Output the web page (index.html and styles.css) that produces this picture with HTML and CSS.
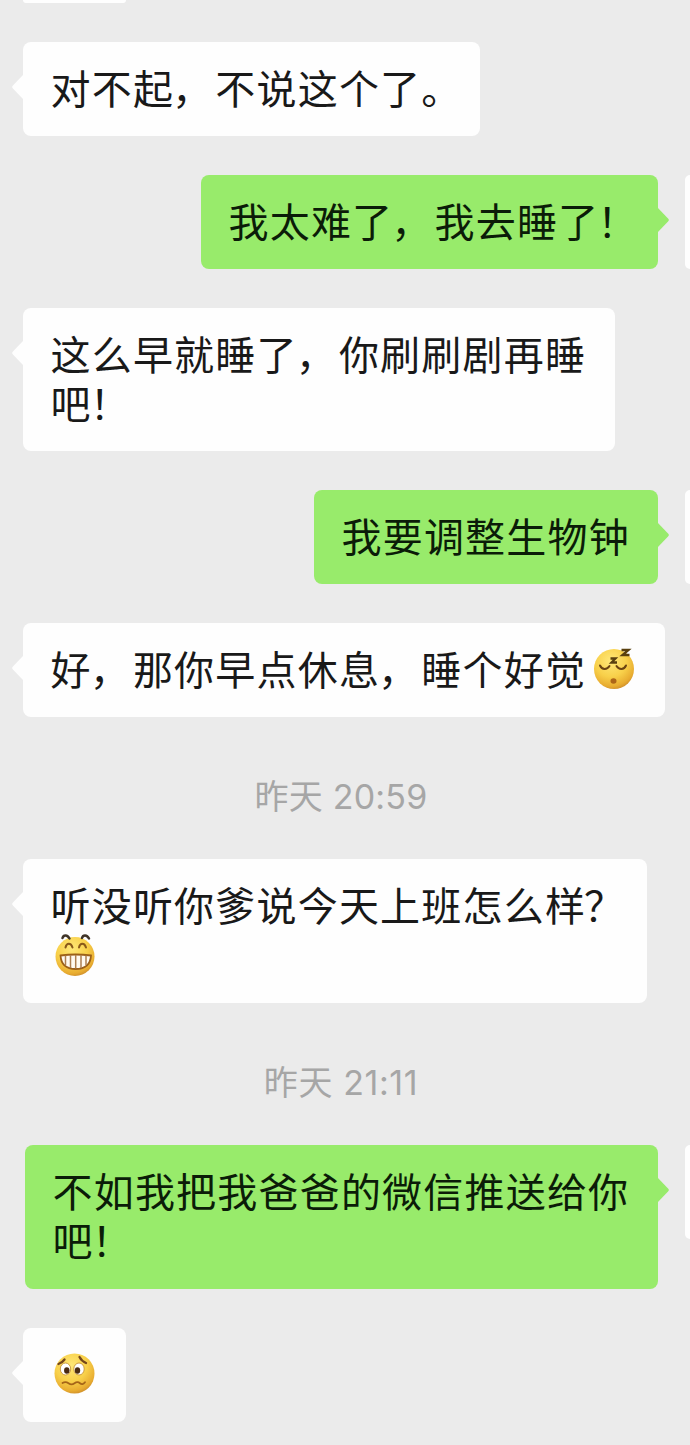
FILE: index.html
```
<!DOCTYPE html>
<html lang="zh-CN">
<head>
<meta charset="utf-8">
<title>聊天</title>
<link rel="stylesheet" href="styles.css">
</head>
<body>
<svg class="defs" width="0" height="0" aria-hidden="true">
  <defs>
    <radialGradient id="face" cx="0.42" cy="0.3" r="0.72">
      <stop offset="0" stop-color="#ffe878"/>
      <stop offset="0.55" stop-color="#f8d04a"/>
      <stop offset="0.88" stop-color="#e8ac30"/>
      <stop offset="1" stop-color="#d0902c"/>
    </radialGradient>
  </defs>
</svg>
<main class="chat">
  <div class="row"><div class="bubble stub"></div></div>
  <div class="row"><div class="bubble in w-457">对不起<span class="punct">，</span>不说这个了。</div></div>
  <div class="row mine"><div class="bubble out w-457">我太难了<span class="punct">，</span>我去睡了<span class="punct">！</span></div><div class="avatar"></div></div>
  <div class="row"><div class="bubble in w-592">这么早就睡了<span class="punct">，</span>你刷刷剧再睡<br>吧<span class="punct">！</span></div></div>
  <div class="row mine"><div class="bubble out w-344">我要调整生物钟</div><div class="avatar"></div></div>
  <div class="row"><div class="bubble in w-642">好<span class="punct">，</span>那你早点休息<span class="punct">，</span>睡个好觉<svg class="emoji sleepy" viewBox="0 0 42 42">
    <circle cx="21" cy="22" r="20" fill="url(#face)"/>
    <g fill="none" stroke="#6b4412" stroke-width="2" stroke-linecap="round">
      <path d="M7 18.500c2 4.500 7 4.500 9.500 .5M23.500 19c2.500 4 7.500 4 9.500-.5"/>
      <path d="M17.500 11.500h5l-4 4h5.500" stroke="#59400f" stroke-width="2.300" stroke-linecap="butt"/>
      <path d="M28.500 3h7l-6 5h7" stroke="#59400f" stroke-width="2.300" stroke-linecap="butt"/>
    </g>
    <ellipse cx="20.500" cy="34" rx="3" ry="2.800" fill="#ad6518"/>
  </svg></div></div>
  <div class="time">昨天 20:59</div>
  <div class="row"><div class="bubble tall in w-624">听没听你爹说今天上班怎么样<span class="punct">？</span><br><svg class="emoji" viewBox="0 0 42 42">
    <circle cx="21" cy="22.500" r="19.500" fill="url(#face)"/>
    <g fill="none" stroke="#3f3428" stroke-width="2.500" stroke-linecap="round">
      <path d="M8.500 4c1-3.500 5-3.500 7 .5M28 4c1-3.500 5-3.500 7 .5"/>
      <path d="M11.500 13.500c1-5 5.500-5 7 0M25 13.500c1-5 5.500-5 7 0" stroke="#8a5919" stroke-width="2"/>
    </g>
    <path d="M6.500 21.500q15-2 30.500 0c-.5 9-6 13.500-15.300 13.500S7 30.500 6.500 21.500z" fill="#fffaf0" stroke="#9c6018" stroke-width="1.800"/>
    <path d="M11.500 21.500v9.500M16.500 21v13M21.700 21v13.500M27 21v13M32 21.500v9.500" stroke="#ad7f50" stroke-width="1.500"/>
  </svg></div></div>
  <div class="time late">昨天 21:11</div>
  <div class="row mine"><div class="bubble tall out w-633">不如我把我爸爸的微信推送给你<br>吧<span class="punct">！</span></div><div class="avatar"></div></div>
  <div class="row"><div class="bubble in w-103"><svg class="emoji worried" viewBox="0 0 42 42">
    <circle cx="21.500" cy="21.500" r="20" fill="url(#face)"/>
    <ellipse cx="12.500" cy="17" rx="5.200" ry="6" fill="#fff" stroke="#c08a2d" stroke-width=".8"/>
    <ellipse cx="26" cy="17" rx="5.200" ry="6" fill="#fff" stroke="#c08a2d" stroke-width=".8"/>
    <ellipse cx="13.800" cy="18.500" rx="2.700" ry="3.300" fill="#4a2b12"/>
    <ellipse cx="24.500" cy="18.500" rx="2.700" ry="3.300" fill="#4a2b12"/>
    <g fill="none" stroke="#74461b" stroke-linecap="round">
      <path d="M5.500 12q3.500-1 6-4.500M26.500 5q2 4 6.500 6" stroke-width="2.300"/>
      <path d="M9.500 31q3-2 6 .2t6 0t5.500 0t5-1" stroke="#a56518" stroke-width="1.800"/>
    </g>
  </svg></div></div>
</main>
</body>
</html>
```
FILE: styles.css
```
* { box-sizing: border-box; }
body {
  margin: 0;
  background: #ebebeb;
  font-family: "Noto Sans CJK SC", sans-serif;
  color: #191919;
}
.defs { position: absolute; }
.chat {
  display: flex;
  flex-direction: column;
  gap: 39px;
  width: 690px;
  height: 1445px;
  overflow: hidden;
}
.row { display: flex; padding-left: 23px; }
.mine { justify-content: flex-end; padding-left: 0; }
.bubble {
  position: relative;
  flex: none;
  min-height: 94px;
  padding: 21px 0 24px 27.500px;
  border-radius: 8px;
  font-size: 40px;
  letter-spacing: 1.200px;
  line-height: 49px;
  white-space: nowrap;
}
.bubble.stub { width: 103px; min-height: 0; height: 3px; padding: 0; border-radius: 0 0 8px 8px; background: #fefefe; }
.bubble.tall { height: 144px; }
.in { background: #fefefe; }
.out { background: #98eb6b; color: #0b1c08; }
.in::before, .out::after {
  content: "";
  position: absolute;
  top: 32px;
  width: 12px;
  height: 26px;
  background: inherit;
}
.in::before { left: -11px; clip-path: polygon(100% 0, 8% 44%, 0 50%, 8% 56%, 100% 100%); }
.out::after { right: -11px; clip-path: polygon(0 0, 92% 44%, 100% 50%, 92% 56%, 0 100%); }
.punct { margin: 0 2px 0 -2px; }
.avatar {
  flex: none;
  width: 5px;
  height: 94px;
  margin-left: 27px;
  border-radius: 8px 0 0 8px;
  background: #fefefe;
}
.emoji { display: inline-block; width: 42px; height: 42px; margin-left: 3px; vertical-align: -6px; }
.sleepy { margin-left: 6.500px; vertical-align: -4px; }
.worried { margin-left: 2px; vertical-align: -4px; }
.time {
  width: 682px;
  height: 64px;
  padding-top: 16px;
  text-align: center;
  color: #a6a6a6;
  font-family: Inter, "Noto Sans CJK SC", sans-serif;
  font-size: 34px;
  letter-spacing: 0.200px;
  line-height: 50px;
  white-space: nowrap;
}
.late { letter-spacing: 0.600px; }
.w-103 { width: 103px; }
.w-344 { width: 344px; }
.w-457 { width: 457px; }
.w-592 { width: 592px; }
.w-624 { width: 624px; }
.w-633 { width: 633px; }
.w-642 { width: 642px; }
```
